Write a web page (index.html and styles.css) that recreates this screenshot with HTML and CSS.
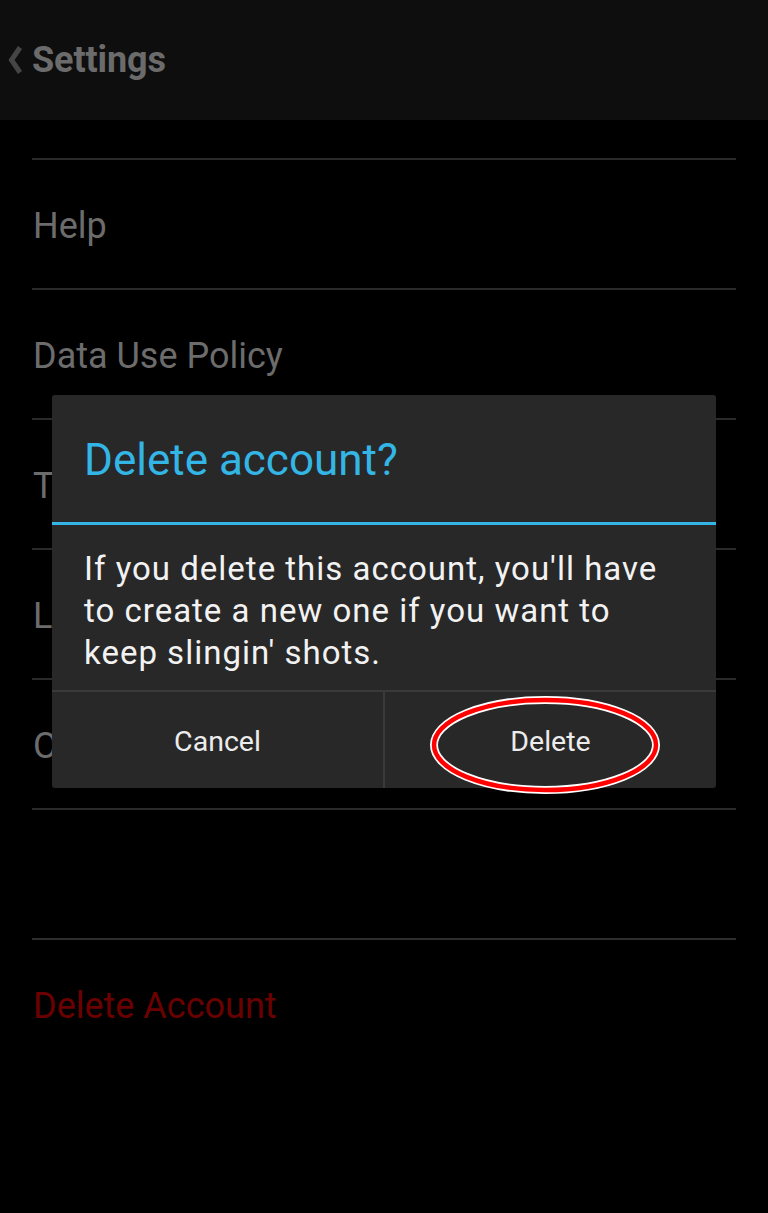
FILE: index.html
```html
<!DOCTYPE html>
<html>
<head>
<meta charset="utf-8">
<link rel="stylesheet" href="styles.css">
</head>
<body>
<div class="screen">
  <header class="appbar">
    <svg class="chev" width="16" height="28" viewBox="0 0 16 28"><path d="M13 1.5 L4.5 14 L13 26.5" fill="none" stroke="#454545" stroke-width="5"/></svg>
    <span class="title">Settings</span>
  </header>
  <ul class="list">
    <li class="item">Help</li>
    <li class="item">Data Use Policy</li>
    <li class="item">Terms of Service</li>
    <li class="item">Log Out</li>
    <li class="item">Open Source Licenses</li>
    <li class="item"></li>
    <li class="item danger">Delete Account</li>
  </ul>

  <div class="dialog">
    <div class="dlg-title">Delete account?</div>
    <div class="dlg-body">If you delete this account, you'll have to create a new one if you want to keep slingin' shots.</div>
    <div class="dlg-buttons">
      <div class="btn">Cancel</div>
      <div class="btn">Delete</div>
    </div>
  </div>

  <svg class="mark" width="232" height="100" viewBox="0 0 232 100">
    <ellipse cx="116" cy="50" rx="111" ry="45" fill="none" stroke="#ffffff" stroke-width="8"/>
    <ellipse cx="116" cy="50" rx="111" ry="45" fill="none" stroke="#ff0000" stroke-width="4.5"/>
  </svg>
</div>
</body>
</html>
```
FILE: styles.css
```css
* { box-sizing: border-box; }
html, body { margin: 0; padding: 0; background: #000; }
body { font-family: Roboto, "Noto Sans", sans-serif; }
.screen { position: relative; width: 768px; height: 1213px; background: #000; overflow: hidden; }
.appbar {
  height: 120px; background: #0e0e0e;
  display: flex; align-items: center; padding-left: 7px; gap: 9px;
}
.chev { margin-top: -1px; }
.title { font-weight: 700; font-size: 36px; color: #6b6b6b; letter-spacing: -0.1px; }
.list { list-style: none; margin: 38px 32px 0; padding: 0; }
.item {
  height: 130px; border-top: 2px solid #2a2a2a;
  display: flex; align-items: center; padding: 3px 0 0 1px;
  font-size: 36px; color: #6c6c6c;
}
.item.danger { border-top-color: #2e2e2e; color: #6a0000; }
.dialog {
  position: absolute; left: 52px; top: 395px; width: 664px; height: 393px;
  background: #282828; border-radius: 3px; display: flex; flex-direction: column;
}
.dlg-title {
  height: 130px; border-bottom: 3px solid #33b5e5;
  display: flex; align-items: center; padding: 3px 0 0 32px;
  font-size: 44px; color: #33b5e5;
}
.dlg-body {
  height: 167px; padding: 23px 28px 0 32px;
  font-size: 33px; letter-spacing: 1px; line-height: 42px; color: #f2f2f2;
  border-bottom: 2px solid #3a3a3a;
}
.dlg-buttons { flex: 1; display: flex; }
.btn {
  flex: 1; display: flex; align-items: center; justify-content: center;
  padding-top: 3px;
  font-size: 28.5px; color: #ececec;
}
.btn + .btn { border-left: 2px solid #3a3a3a; }
.mark { position: absolute; left: 429px; top: 695px; }
```
